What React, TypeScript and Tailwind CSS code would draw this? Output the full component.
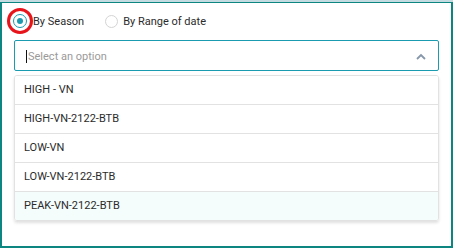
import React from "react";

const items = ["HIGH - VN", "HIGH-VN-2122-BTB", "LOW-VN", "LOW-VN-2122-BTB", "PEAK-VN-2122-BTB"];

export default function App() {
  return (
    <div className="w-[453px] h-[248px] bg-white flex flex-col" style={{ fontFamily: "Roboto, 'Liberation Sans', sans-serif" }}>
      <div className="h-[2px] w-full bg-[#c3dbe1] shrink-0" />
      <div className="flex-1 border-t border-l-2 border-r-2 border-b-2 border-[#0d8581] flex flex-col">
        <div className="relative flex items-center mt-[11px] ml-[11px] h-[14px]">
          <div className="absolute left-[-6px] top-[-6px] w-[26px] h-[26px] rounded-full border-[3px] border-[#e8141c] pointer-events-none" />
          <div className="w-[14px] h-[14px] rounded-full border border-[#1b9bb0] flex items-center justify-center bg-white">
            <div className="w-[6px] h-[6px] rounded-full bg-[#1b9bb0]" />
          </div>
          <span className="ml-[6px] text-[11px] text-[#2b2b2b] leading-none">By Season</span>
          <div className="ml-[21px] w-[13px] h-[13px] rounded-full border border-[#d4d4d4] bg-white" />
          <span className="ml-[5px] text-[11px] text-[#2b2b2b] leading-none">By Range of date</span>
        </div>
        <div className="mt-[12px] mx-[12px] h-[31px] border border-[#1b9bb0] rounded-[2px] flex items-center pl-[11px] pr-[12px]">
          <div className="w-px h-[13px] bg-[#111] mt-[1px]" />
          <span className="ml-px mt-[1px] text-[11px] text-[#9a9a9a] leading-none flex-1">Select an option</span>
          <svg width="10" height="7" viewBox="0 0 10 7" className="mt-[1px]">
            <path d="M1 6 L5 2 L9 6" fill="none" stroke="#8597a8" strokeWidth="1.8" />
          </svg>
        </div>
        <div className="mt-[4px] mx-[12px] border border-[#e2e2e2] rounded-[3px] shadow-[0_2px_3px_rgba(0,0,0,0.12)] overflow-hidden">
          {items.map((t, i) => (
            <div
              key={t}
              className={
                "flex items-center px-[9px] text-[11px] text-[#2b2b2b] " +
                (i < items.length - 1 ? "h-[29px] border-b border-[#e2e2e2] bg-white" : "h-[28px] bg-[#f5fcfc]")
              }
            >
              {t}
            </div>
          ))}
        </div>
      </div>
    </div>
  );
}
